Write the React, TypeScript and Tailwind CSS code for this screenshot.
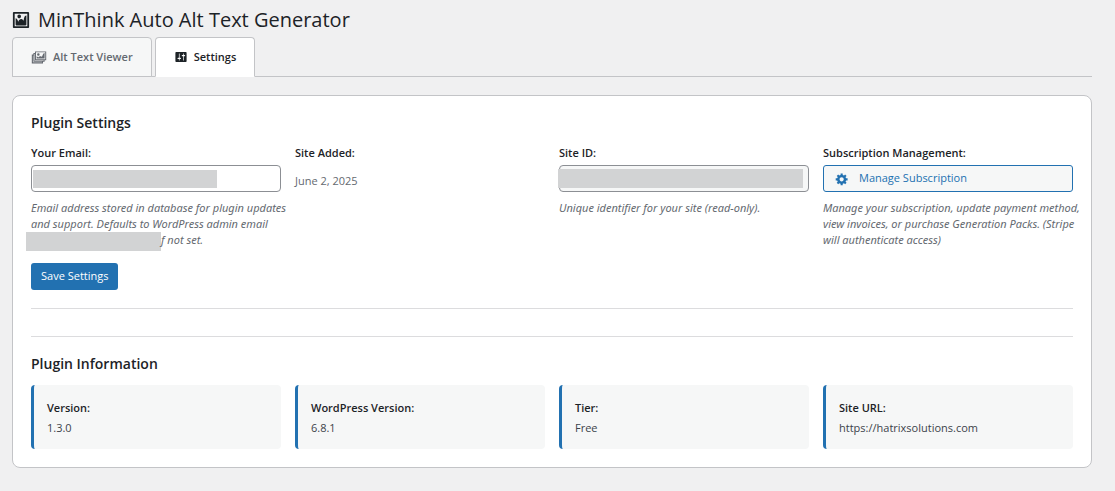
import React, { useState } from 'react';
import clsx from 'clsx';

type TabId = 'viewer' | 'settings';

interface IconProps {
  className?: string;
}

const ImageIcon = ({ className }: IconProps) => (
  <svg viewBox="0 0 20 20" fill="currentColor" className={className} aria-hidden="true">
    <path d="M2.25 1h15.5c.69 0 1.25.56 1.25 1.25v15.5c0 .69-.56 1.25-1.25 1.25H2.25C1.56 19 1 18.44 1 17.75V2.25C1 1.56 1.56 1 2.25 1zM17 17V3H3v14h14zM10 6c0-1.1-.9-2-2-2s-2 .9-2 2 .9 2 2 2 2-.9 2-2zm3 5s0-6 3-6v10c0 .55-.45 1-1 1H5c-.55 0-1-.45-1-1V8c2 0 3 4 3 4s1-3 3-3 3 2 3 2z" />
  </svg>
);

const GalleryIcon = ({ className }: IconProps) => (
  <svg viewBox="0 0 20 20" fill="currentColor" className={className} aria-hidden="true">
    <path
      fillRule="evenodd"
      d="M5 3h14v11h-2v2h-2v2H1V7h2V5h2V3zM17.8 12.8V4.2H6.2v8.6h11.6zM5 6.2H4.4v8.4h11.4V14H5V6.2zM3 8.2H2.4v8.4h11.4V16H3V8.2z"
    />
    <path d="M10.8 6.8a1.6 1.6 0 1 1-3.2 0 1.6 1.6 0 0 1 3.2 0zM7 12V9c1.5.6 2 1.5 2.2 1.5S10 9 11.5 9s1.7.8 2 .8c.8 0 .8-4 3.5-4.8V12H7z" />
  </svg>
);

const SlidersIcon = ({ className }: IconProps) => (
  <svg viewBox="0 0 20 20" fill="currentColor" className={className} aria-hidden="true">
    <path
      fillRule="evenodd"
      d="M18 16V4c0-.55-.45-1-1-1H3c-.55 0-1 .45-1 1v12c0 .55.45 1 1 1h14c.55 0 1-.45 1-1zM8 11h1c.55 0 1 .45 1 1s-.45 1-1 1H8v1.5c0 .28-.22.5-.5.5s-.5-.22-.5-.5V13H6c-.55 0-1-.45-1-1s.45-1 1-1h1V5.5c0-.28.22-.5.5-.5s.5.22.5.5V11zm5-2h-1c-.55 0-1-.45-1-1s.45-1 1-1h1V5.5c0-.28.22-.5.5-.5s.5.22.5.5V7h1c.55 0 1 .45 1 1s-.45 1-1 1h-1v5.5c0 .28-.22.5-.5.5s-.5-.22-.5-.5V9z"
    />
  </svg>
);

const GearIcon = ({ className }: IconProps) => (
  <svg viewBox="0 0 20 20" fill="currentColor" className={className} aria-hidden="true">
    <path
      fillRule="evenodd"
      d="M18 12h-2.18c-.17.7-.44 1.35-.81 1.93l1.54 1.54-2.1 2.1-1.54-1.54c-.58.36-1.23.63-1.91.79V19H8v-2.18c-.68-.16-1.33-.43-1.91-.79l-1.54 1.54-2.12-2.12 1.54-1.54c-.36-.58-.63-1.23-.79-1.91H1V9.03h2.17c.16-.7.44-1.35.8-1.94L2.43 5.55l2.1-2.1 1.54 1.54c.58-.37 1.24-.64 1.93-.81V2h3v2.18c.68.16 1.33.43 1.91.79l1.54-1.54 2.12 2.12-1.54 1.54c.36.59.64 1.24.8 1.94H18V12zm-8.5 1.5c1.66 0 3-1.34 3-3s-1.34-3-3-3-3 1.34-3 3 1.34 3 3 3z"
    />
  </svg>
);

const TABS = [
  { id: 'viewer' as TabId, label: 'Alt Text Viewer', icon: <GalleryIcon className="w-4 h-4" /> },
  { id: 'settings' as TabId, label: 'Settings', icon: <SlidersIcon className="w-3.5 h-3.5" /> },
];

const PLUGIN_INFO = [
  { label: 'Version:', value: '1.3.0' },
  { label: 'WordPress Version:', value: '6.8.1' },
  { label: 'Tier:', value: 'Free' },
  { label: 'Site URL:', value: 'https://hatrixsolutions.com' },
];

const headingClass = 'text-sm leading-[18px] font-semibold';
const labelClass = 'block text-[11px] leading-4 font-semibold text-[#1d2327]';
const helpClass = "mt-2 font-['Noto_Sans',sans-serif] text-[11px] leading-4 italic whitespace-nowrap text-[#646970]";
const inputClass = 'block w-full h-[27px] px-2 text-[11px] rounded border border-[#8c8f94] outline-none';

function App() {
  const [activeTab, setActiveTab] = useState<TabId>('settings');
  const [email, setEmail] = useState('');

  return (
    <div className="min-h-screen bg-[#f0f0f1] pl-3 pr-[23px] pt-2 pb-6 font-['Open_Sans','Noto_Sans',sans-serif] text-[#1d2327]">
      <h1 className="flex items-center gap-2 text-xl leading-6">
        <ImageIcon className="w-[18px] h-[18px]" />
        MinThink Auto Alt Text Generator
      </h1>

      <nav className="mt-[5px] flex gap-[3px] border-b border-[#c3c4c7]">
        {TABS.map((tab) => (
          <button
            key={tab.id}
            type="button"
            onClick={() => setActiveTab(tab.id)}
            className={clsx(
              '-mb-px flex h-10 items-center gap-1.5 rounded-t border border-[#c3c4c7] px-[18px] text-[11px] font-semibold',
              activeTab === tab.id ? 'border-b-white bg-white text-[#1d2327]' : 'bg-[#f6f7f7] text-[#646970]'
            )}
          >
            {tab.icon}
            {tab.label}
          </button>
        ))}
      </nav>

      <main className="mt-[18px] rounded-lg border border-[#c3c4c7] bg-white p-[18px]">
        <h2 className={headingClass}>Plugin Settings</h2>

        <form onSubmit={(e) => e.preventDefault()}>
          <div className="mt-[13px] grid grid-cols-4 gap-3.5">
            <div>
              <label htmlFor="email" className={labelClass}>Your Email:</label>
              <div className="relative mt-1">
                <input
                  id="email"
                  type="email"
                  value={email}
                  onChange={(e) => setEmail(e.target.value)}
                  className={clsx(inputClass, 'bg-white')}
                />
                <span className="absolute left-0.5 top-[5px] h-[18px] w-[184px] bg-[#d2d3d4]" />
              </div>
              <p className={helpClass}>
                Email address stored in database for plugin updates
                <br />
                and support. Defaults to WordPress admin email
                <br />
                <span className="-my-1 -ml-[5px] inline-block h-[19px] w-[135px] bg-[#d2d3d4] align-middle" />
                f not set.
              </p>
            </div>

            <div>
              <span className={labelClass}>Site Added:</span>
              <p className="mt-3 text-[11px] leading-4 text-[#646970]">June 2, 2025</p>
            </div>

            <div>
              <label htmlFor="site-id" className={labelClass}>Site ID:</label>
              <div className="relative mt-1">
                <input id="site-id" type="text" readOnly className={clsx(inputClass, 'bg-[#f6f7f7]')} />
                <span className="absolute -left-px right-1.5 top-1 h-[19px] bg-[#d2d3d4]" />
              </div>
              <p className={helpClass}>Unique identifier for your site (read-only).</p>
            </div>

            <div>
              <span className={labelClass}>Subscription Management:</span>
              <a
                href="#subscription"
                className="mt-1 flex h-[27px] items-center gap-2.5 rounded-[3px] border border-[#2271b1] bg-[#f6f7f7] px-[11px] text-[11px] text-[#2271b1]"
              >
                <GearIcon className="w-3.5 h-3.5" />
                Manage Subscription
              </a>
              <p className={helpClass}>
                Manage your subscription, update payment method,
                <br />
                view invoices, or purchase Generation Packs. (Stripe
                <br />
                will authenticate access)
              </p>
            </div>
          </div>

          <button
            type="submit"
            className="mt-[15px] block h-[27px] rounded-[3px] bg-[#2271b1] px-2.5 text-[11px] text-white"
          >
            Save Settings
          </button>
        </form>

        <hr className="mt-[18px] border-[#dcdcde]" />
        <hr className="mt-[27px] border-[#dcdcde]" />

        <h2 className={clsx(headingClass, 'mt-[18px]')}>Plugin Information</h2>
        <dl className="mt-3 grid grid-cols-4 gap-3.5">
          {PLUGIN_INFO.map((item) => (
            <div
              key={item.label}
              className="rounded border-l-[3px] border-[#2271b1] bg-[#f6f7f7] px-[13px] pt-[15px] pb-[11px]"
            >
              <dt className={labelClass}>{item.label}</dt>
              <dd className="mt-0.5 text-[11px] leading-5 text-[#3c434a]">{item.value}</dd>
            </div>
          ))}
        </dl>
      </main>
    </div>
  );
}

export default App;
